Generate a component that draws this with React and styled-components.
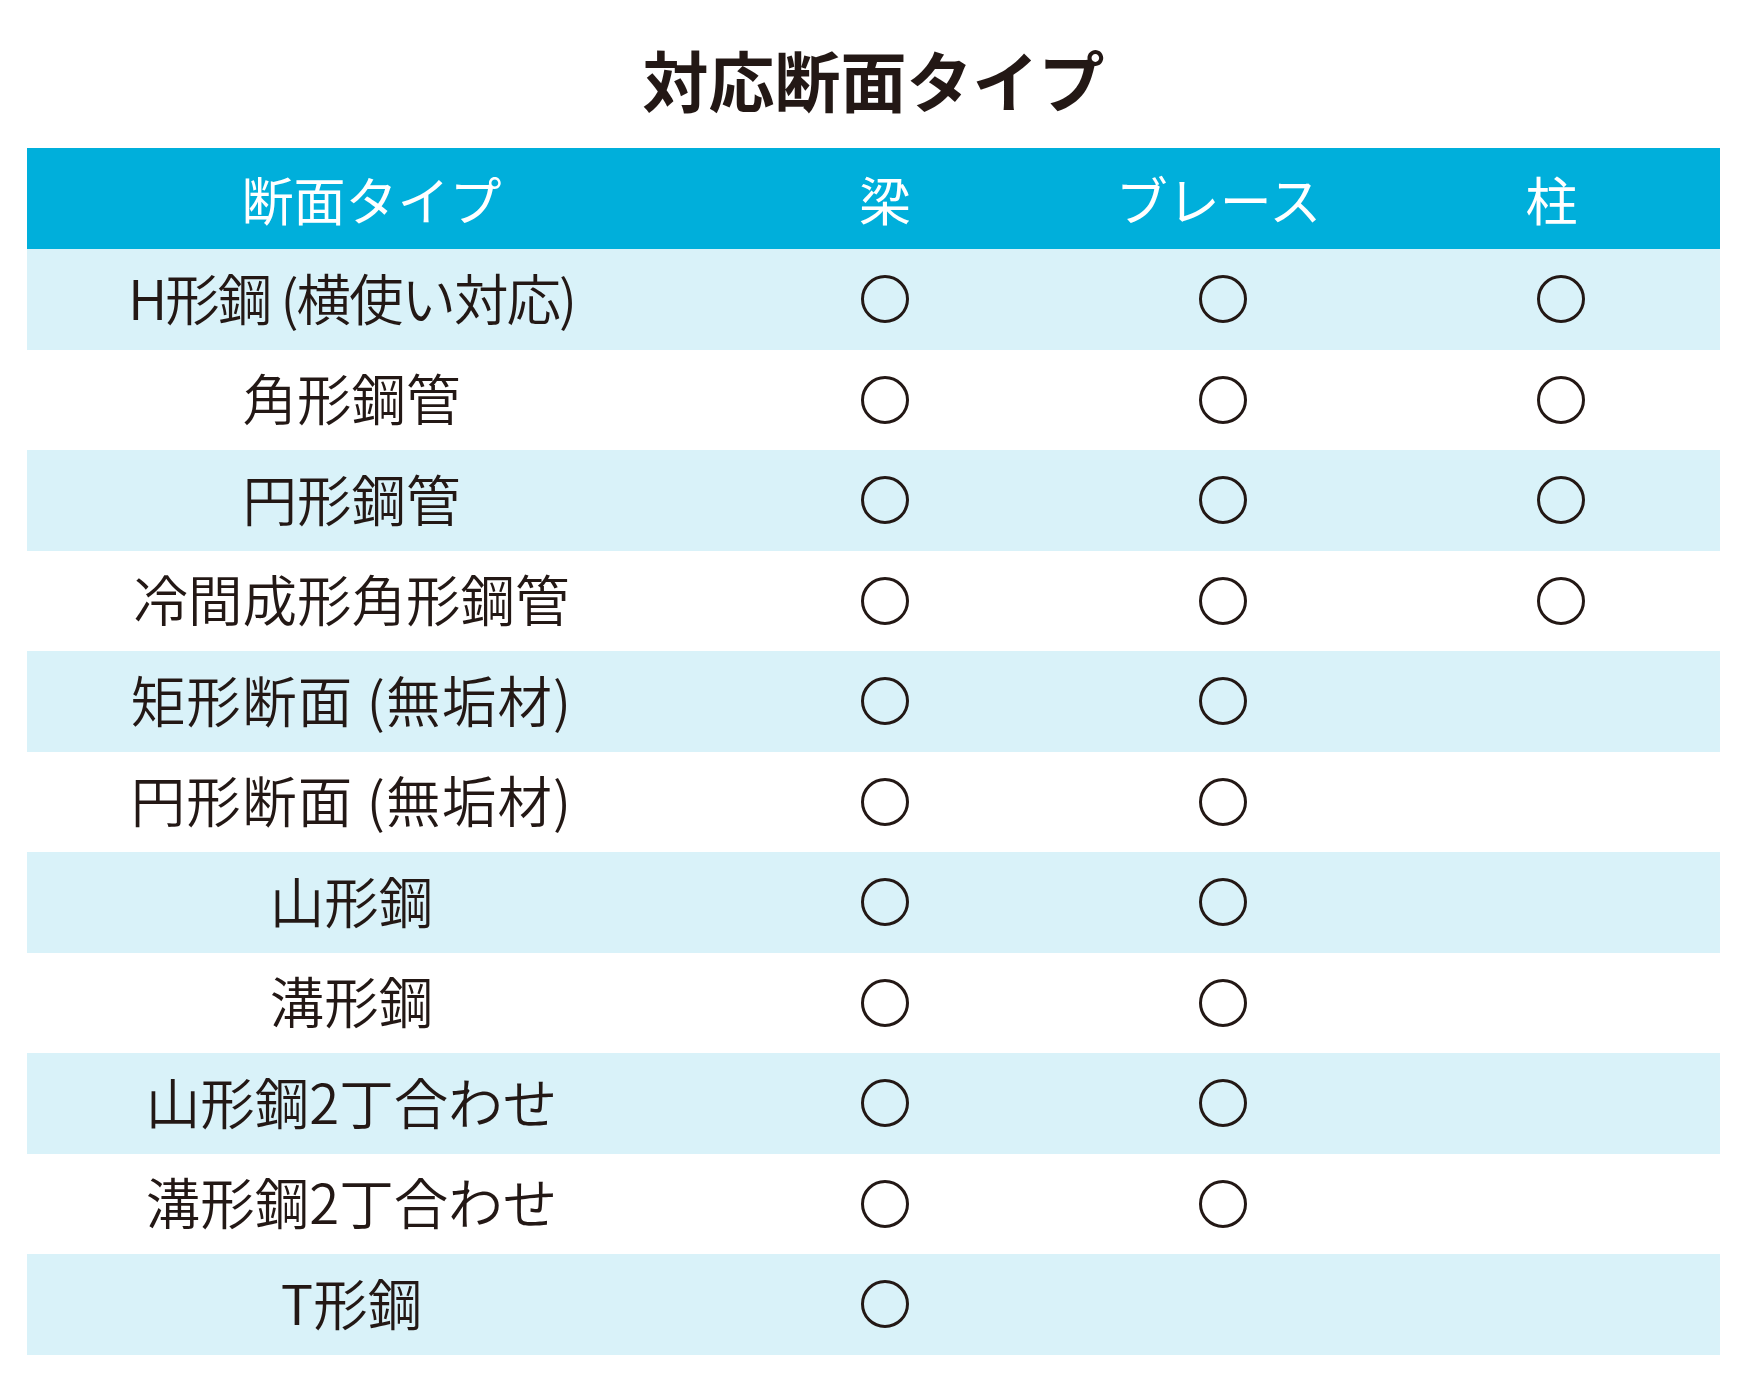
import React from "react"
import styled, { createGlobalStyle } from "styled-components"

const GlobalStyle = createGlobalStyle`
  html, body {
    margin: 0;
    padding: 0;
    background: #ffffff;
  }
  body {
    font-family: "Noto Sans CJK JP", sans-serif;
    color: #231815;
  }
`

const Page = styled.div`
  width: 1747px;
  padding: 0 27px;
  box-sizing: border-box;
`

const Title = styled.h1`
  margin: 0;
  height: 148px;
  padding-top: 8px;
  box-sizing: border-box;
  line-height: 140px;
  text-align: center;
  font-size: 66px;
  font-weight: 700;
  color: #231815;
`

const Table = styled.div`
  display: grid;
  grid-template-columns: 689px 338px 337px 329px;
`

const HeadCell = styled.div`
  height: 101px;
  background: #00afdb;
  color: #ffffff;
  display: flex;
  align-items: center;
  justify-content: center;
  font-size: 52px;
  font-weight: 400;
  padding-right: ${(p) => p.$pull || 0}px;
`

const Cell = styled.div`
  height: 100.5px;
  background: ${(p) => (p.$tinted ? "#d9f2f9" : "#ffffff")};
  display: flex;
  align-items: center;
  justify-content: center;
`

const Label = styled(Cell)`
  padding-right: 40px;
  padding-bottom: 6px;
  box-sizing: border-box;
  font-size: 54.5px;
  font-weight: 350;
  letter-spacing: ${(p) => p.$track || 0}px;
  color: #231815;
  white-space: pre;
`

const Mark = styled.span`
  display: block;
  width: 48px;
  height: 48px;
  border: 3.4px solid #231815;
  border-radius: 50%;
  box-sizing: border-box;
  margin-left: ${(p) => p.$shift || 0}px;
`

const rows = [
  { name: "H形鋼 (横使い対応)", count: 3, track: -2 },
  { name: "角形鋼管", count: 3 },
  { name: "円形鋼管", count: 3 },
  { name: "冷間成形角形鋼管", count: 3 },
  { name: "矩形断面 (無垢材)", count: 2, track: 1.2 },
  { name: "円形断面 (無垢材)", count: 2, track: 1.2 },
  { name: "山形鋼", count: 2 },
  { name: "溝形鋼", count: 2 },
  { name: "山形鋼2丁合わせ", count: 2 },
  { name: "溝形鋼2丁合わせ", count: 2 },
  { name: "T形鋼", count: 1 },
]

const shifts = [0, 0, 10]

export default function App() {
  return (
    <Page>
      <GlobalStyle />
      <Title>対応断面タイプ</Title>
      <Table>
        <HeadCell>断面タイプ</HeadCell>
        <HeadCell>梁</HeadCell>
        <HeadCell $pull={8}>ブレース</HeadCell>
        <HeadCell $pull={8}>柱</HeadCell>
        {rows.map((row, i) => {
          const tinted = i % 2 === 0
          return (
            <React.Fragment key={row.name}>
              <Label $tinted={tinted} $track={row.track}>
                {row.name}
              </Label>
              {[0, 1, 2].map((c) => (
                <Cell key={c} $tinted={tinted}>
                  {c < row.count && <Mark $shift={shifts[c]} />}
                </Cell>
              ))}
            </React.Fragment>
          )
        })}
      </Table>
    </Page>
  )
}
